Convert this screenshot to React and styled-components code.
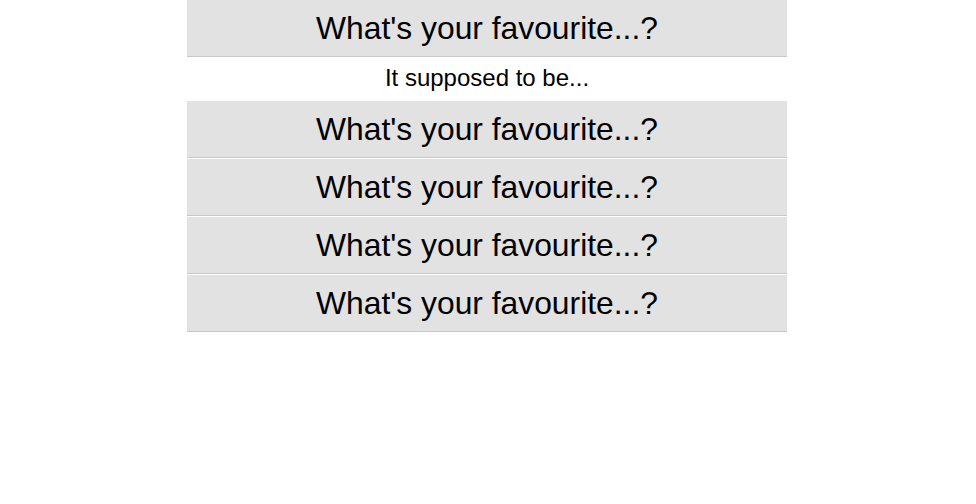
import React from "react";
import styled, { createGlobalStyle } from "styled-components";

const GlobalStyle = createGlobalStyle`
  body {
    margin: 0;
    background: #fff;
    font-family: "Liberation Sans", Arial, sans-serif;
  }
`;

const Accordion = styled.div`
  width: 600px;
  margin-left: 187px;
  display: flex;
  flex-direction: column;
`;

const Question = styled.div`
  height: 56px;
  line-height: 56px;
  background: #e2e2e2;
  border-bottom: 1px solid #c8c8c8;
  margin-bottom: 1px;
  text-align: center;
  font-size: 31.8px;
  color: #000;
`;

const Answer = styled.div`
  height: 43px;
  line-height: 40px;
  text-align: center;
  font-size: 24px;
  color: #000;
`;

const items = [
  { q: "What's your favourite...?", a: "It supposed to be...", open: true },
  { q: "What's your favourite...?", a: "It supposed to be..." },
  { q: "What's your favourite...?", a: "It supposed to be..." },
  { q: "What's your favourite...?", a: "It supposed to be..." },
  { q: "What's your favourite...?", a: "It supposed to be..." },
];

function App() {
  return (
    <>
      <GlobalStyle />
      <Accordion>
        {items.map((item, i) => (
          <React.Fragment key={i}>
            <Question>{item.q}</Question>
            {item.open && <Answer>{item.a}</Answer>}
          </React.Fragment>
        ))}
      </Accordion>
    </>
  );
}

export default App;
